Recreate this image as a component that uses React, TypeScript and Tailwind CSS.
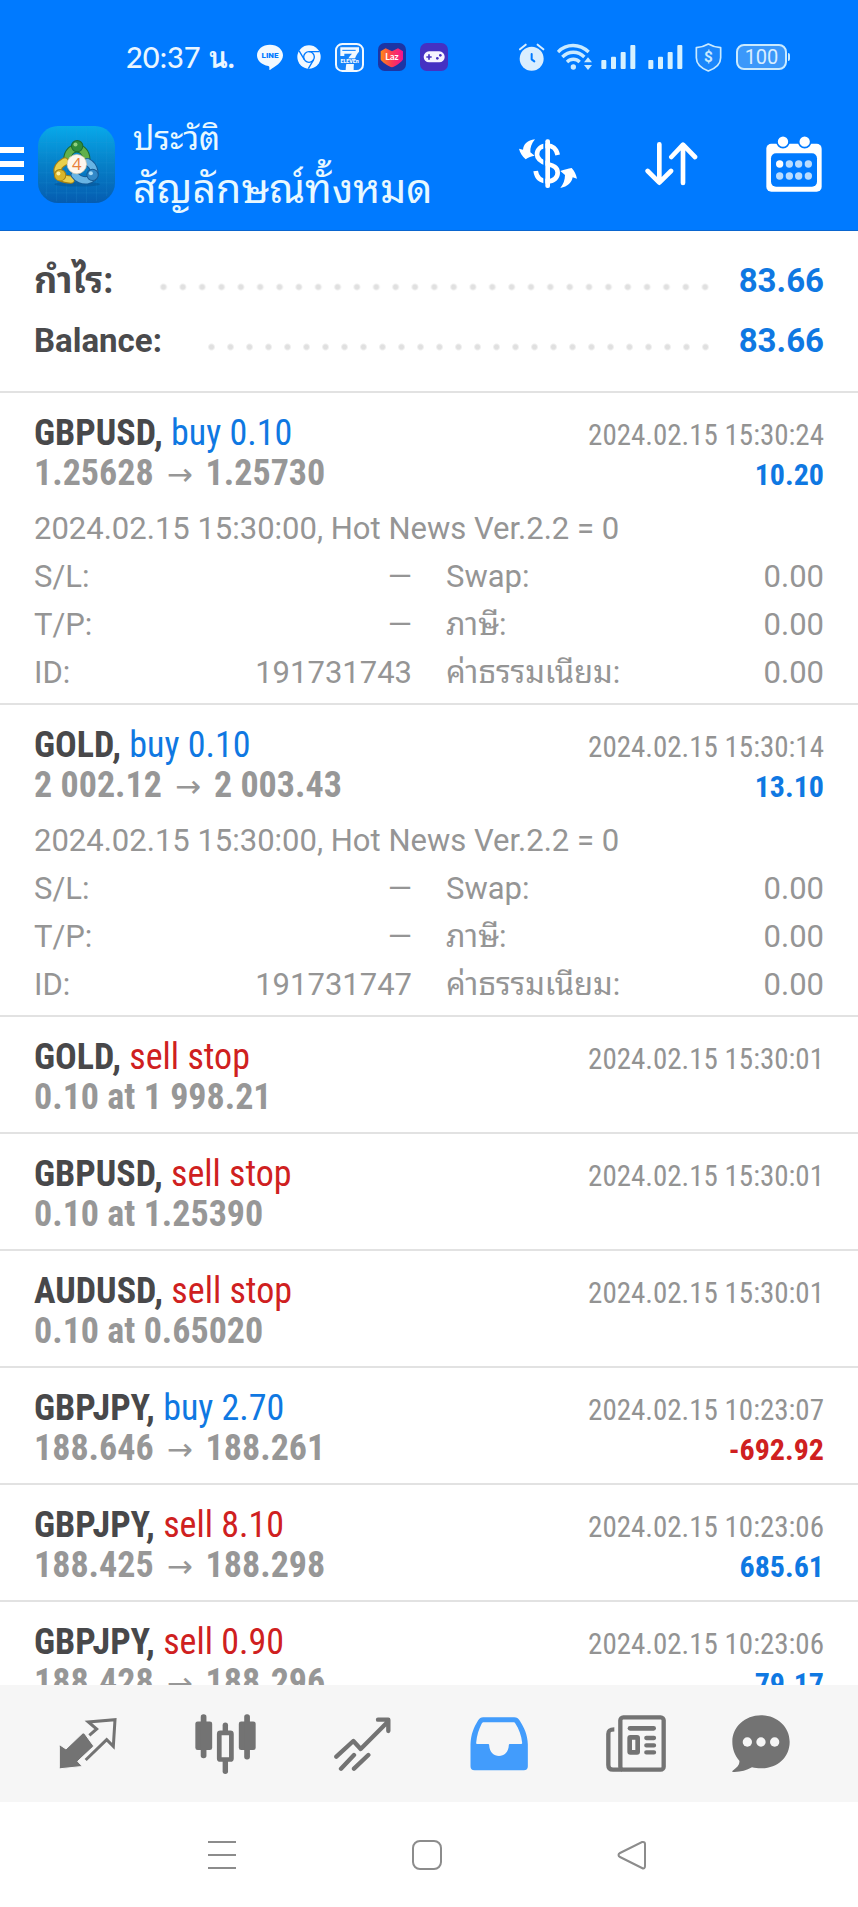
import { ReactNode } from 'react';

interface TradeDetails {
    comment: string;
    id: string;
}

interface Trade {
    symbol: string;
    side: 'buy' | 'sell';
    action: string;
    from: string;
    to?: string;
    time: string;
    profit?: string;
    details?: TradeDetails;
}

const COMMENT = '2024.02.15 15:30:00, Hot News Ver.2.2 = 0';

const trades: Trade[] = [
    { symbol: 'GBPUSD', side: 'buy', action: 'buy 0.10', from: '1.25628', to: '1.25730', time: '2024.02.15 15:30:24', profit: '10.20', details: { comment: COMMENT, id: '191731743' } },
    { symbol: 'GOLD', side: 'buy', action: 'buy 0.10', from: '2 002.12', to: '2 003.43', time: '2024.02.15 15:30:14', profit: '13.10', details: { comment: COMMENT, id: '191731747' } },
    { symbol: 'GOLD', side: 'sell', action: 'sell stop', from: '0.10 at 1 998.21', time: '2024.02.15 15:30:01' },
    { symbol: 'GBPUSD', side: 'sell', action: 'sell stop', from: '0.10 at 1.25390', time: '2024.02.15 15:30:01' },
    { symbol: 'AUDUSD', side: 'sell', action: 'sell stop', from: '0.10 at 0.65020', time: '2024.02.15 15:30:01' },
    { symbol: 'GBPJPY', side: 'buy', action: 'buy 2.70', from: '188.646', to: '188.261', time: '2024.02.15 10:23:07', profit: '-692.92' },
    { symbol: 'GBPJPY', side: 'sell', action: 'sell 8.10', from: '188.425', to: '188.298', time: '2024.02.15 10:23:06', profit: '685.61' },
    { symbol: 'GBPJPY', side: 'sell', action: 'sell 0.90', from: '188.428', to: '188.296', time: '2024.02.15 10:23:06', profit: '79.17' },
];

function LineIcon() {
    return (
        <svg className="w-[26px] h-[26px]" viewBox="0 0 78 78" aria-hidden="true">
            <path fill="#f2f9ff" d="M39 2C17 2 0 16 0 34c0 16 14 29 34 32 4 1 3 4 3 10 0 2 1 2 3 1 12-7 38-22 38-43C78 16 61 2 39 2Z" />
            <text x="39" y="43" textAnchor="middle" fontFamily="Roboto" fontWeight="900" fontSize="24" fill="#007aff">LINE</text>
        </svg>
    )
}

function ChromeIcon() {
    return (
        <svg className="w-6 h-6" viewBox="0 0 72 72" aria-hidden="true">
            <circle cx="36" cy="36" r="35" fill="#f2f9ff" />
            <g fill="none" stroke="#007aff" strokeWidth="4">
                <circle cx="36" cy="36" r="16" />
                <path d="M36 20h31M22 44 6 17M50 44 34 71" />
            </g>
            <circle cx="36" cy="36" r="11" fill="#f2f9ff" />
        </svg>
    )
}

function SevenIcon() {
    return (
        <svg className="w-[29px] h-[29px]" viewBox="0 0 87 87" aria-hidden="true">
            <rect x="3" y="3" width="81" height="81" rx="19" fill="#1583fa" stroke="#f2f9ff" strokeWidth="6" />
            <path fill="#f2f9ff" d="M16 13h56v13C61 38 56 52 56 81H32c1-24 7-38 19-49H28v7H16Z" />
            <path stroke="#007aff" strokeWidth="3" d="M22 22h40" />
            <path fill="#1583fa" d="M18 46h53v17H18z" />
            <text x="44" y="60" textAnchor="middle" fontFamily="Roboto" fontWeight="900" fontSize="16" fill="#f2f9ff">ELEVEn</text>
        </svg>
    )
}

function LazadaIcon() {
    return (
        <svg className="w-7 h-7" viewBox="0 0 84 84" aria-hidden="true">
            <defs>
                <linearGradient id="laz" x1="0" y1="0" x2="1" y2="0">
                    <stop offset="0" stopColor="#ff8a16" />
                    <stop offset="0.5" stopColor="#fb3a55" />
                    <stop offset="1" stopColor="#f2128f" />
                </linearGradient>
            </defs>
            <rect width="84" height="84" rx="20" fill="#1c35a4" />
            <path fill="url(#laz)" d="m8 25 15-9 19 9 18-9 15 9v24c0 5-26 24-33 24S8 55 8 49Z" />
            <text x="42" y="51" textAnchor="middle" fontFamily="Lato" fontWeight="700" fontSize="27" fill="#fff">Laz</text>
        </svg>
    )
}

function GameIcon() {
    return (
        <svg className="w-7 h-7" viewBox="0 0 84 84" aria-hidden="true">
            <rect width="84" height="84" rx="20" fill="#4531c2" />
            <rect x="11" y="25" width="63" height="33" rx="16" fill="#f6f4ff" />
            <path stroke="#4531c2" strokeWidth="5" d="M19 42h16M27 34v16" />
            <circle cx="52" cy="46" r="4" fill="#4531c2" />
            <circle cx="61" cy="37" r="4" fill="#4531c2" />
        </svg>
    )
}

function AlarmIcon() {
    return (
        <svg className="w-[26px] h-7" viewBox="0 0 78 84" aria-hidden="true">
            <circle cx="38" cy="47" r="36" fill="#d9eeff" />
            <path fill="none" stroke="#d9eeff" strokeWidth="6" strokeLinecap="round" d="M3 19 20 5M73 19 56 5" />
            <path fill="none" stroke="#007aff" strokeWidth="6" strokeLinecap="round" strokeLinejoin="round" d="M38 33v16l8 6" />
        </svg>
    )
}

function WifiIcon() {
    return (
        <svg className="w-9 h-7" viewBox="0 0 108 84" aria-hidden="true">
            <g fill="none" stroke="#c9eaff" strokeWidth="10">
                <path d="M3 27C28 1 68 1 95 27" />
                <path d="M16 42c19-19 47-19 66 0" />
                <path d="M30 57c11-11 27-11 38 0" />
            </g>
            <circle cx="49" cy="72" r="8" fill="#c9eaff" />
            <path fill="#c9eaff" d="m93 43 12 15H81ZM93 81 81 66h24Z" />
        </svg>
    )
}

function SignalIcon() {
    return (
        <svg className="w-[35px] h-[26px]" viewBox="0 0 105 78" fill="#d5f1ff" aria-hidden="true">
            <rect x="1" y="48" width="15" height="27" rx="3" />
            <rect x="30" y="38" width="15" height="37" rx="3" />
            <rect x="59" y="24" width="15" height="51" rx="3" />
            <rect x="88" y="3" width="15" height="72" rx="3" />
        </svg>
    )
}

function ShieldIcon() {
    return (
        <svg className="w-[27px] h-[29px]" viewBox="0 0 81 87" aria-hidden="true">
            <path fill="#1b86fb" stroke="#c9eaff" strokeWidth="5" strokeLinejoin="round" d="M40 3c12 7 24 10 37 11v30c0 20-16 32-37 40C20 76 4 64 4 44V14C17 13 28 10 40 3Z" />
            <text x="40" y="58" textAnchor="middle" fontFamily="Roboto" fontWeight="700" fontSize="46" fill="#c9eaff">$</text>
        </svg>
    )
}

function Battery() {
    return (
        <div className="flex items-center gap-px">
            <div className="flex h-[26px] w-[51px] items-center justify-center rounded-lg border-2 border-[#c9eaff] bg-[#3b98fa] font-[Roboto] text-xl leading-none text-[#d9eeff]">
                100
            </div>
            <div className="h-2 w-0.5 rounded-r bg-[#c9eaff]"></div>
        </div>
    )
}

function AppLogo() {
    return (
        <svg className="w-[77px] h-[77px] shrink-0" viewBox="0 0 230 230" aria-hidden="true">
            <defs>
                <linearGradient id="logoBg" x1="0" y1="0" x2="0" y2="1">
                    <stop offset="0" stopColor="#08a9ea" />
                    <stop offset="0.5" stopColor="#0680c8" />
                    <stop offset="1" stopColor="#055cb0" />
                </linearGradient>
            </defs>
            <rect width="230" height="230" rx="60" fill="url(#logoBg)" />
            <path stroke="#2fa0da" strokeOpacity="0.25" strokeWidth="2" d="M25 20v190M55 5v220M85 2v226M115 2v226M145 2v226M175 5v220M205 20v190M5 50h220M2 80h226M2 110h226M2 140h226M2 170h226M20 200h190" />
            <ellipse cx="117" cy="174" rx="68" ry="7" fill="#03508f" opacity="0.5" />
            {/* people: head on a curved body, one per colour */}
            <g fill="none" strokeLinecap="round">
                <path stroke="#1d6a31" strokeWidth="25" d="M88 98c2-42 54-42 56 0" />
                <path stroke="#62b04c" strokeWidth="19" d="M88 98c2-42 54-42 56 0" />
                <path stroke="#a37f13" strokeWidth="25" d="M80 106c-34 18-28 52 18 54" />
                <path stroke="#ead04c" strokeWidth="19" d="M80 106c-34 18-28 52 18 54" />
                <path stroke="#155994" strokeWidth="25" d="M110 146c16 24 62 22 58-10-2-12-8-22-20-28" />
                <path stroke="#68b4e4" strokeWidth="19" d="M110 146c16 24 62 22 58-10-2-12-8-22-20-28" />
            </g>
            <circle cx="116" cy="114" r="29" fill="#fdf6ee" stroke="#d9c9a8" strokeWidth="2" />
            <circle cx="117" cy="60" r="17" fill="#2f8d3c" stroke="#1d6a31" strokeWidth="3" />
            <circle cx="66" cy="147" r="17" fill="#d9b52a" stroke="#a37f13" strokeWidth="3" />
            <circle cx="163" cy="146" r="17" fill="#3389c8" stroke="#155994" strokeWidth="3" />
            <circle cx="112" cy="55" r="6" fill="#90d080" />
            <circle cx="61" cy="142" r="6" fill="#fff2a0" />
            <circle cx="158" cy="141" r="6" fill="#a8dcf8" />
            <text x="116" y="132" textAnchor="middle" fontFamily="Open Sans" fontSize="50" fill="#e8803a">4</text>
        </svg>
    )
}

function CurrencyIcon() {
    return (
        <svg className="w-[58px] h-[50px]" viewBox="0 0 174 150" fill="#fff" aria-hidden="true">
            <path d="M48 1C25 4 14 15 12 32L0 29c3 13 10 23 20 32 8-6 17-10 27-11L34 40C33 26 38 12 48 1Z" />
            <path fill="none" stroke="#fff" strokeWidth="14" d="M116 48C112 28 99 20 86 20 65 20 54 32 54 46c0 17 16 24 32 29s30 9 30 26c0 15-12 26-30 26-20 0-33-10-36-31" />
            <path fill="#007aff" d="M73 0h6v150h-6z" />
            <rect x="79" y="1" width="14" height="146" rx="6" />
            <path d="M124 147c23-4 34-16 37-32l13 4c-3-13-8-23-16-32-10 2-22 5-34 9l14 12c0 15-5 28-14 39Z" />
        </svg>
    )
}

function SortIcon() {
    return (
        <svg className="w-[53px] h-[46px]" viewBox="0 0 159 138" fill="none" stroke="#fff" strokeWidth="14" strokeLinecap="round" strokeLinejoin="round" aria-hidden="true">
            <path d="M43 10v112M8 90l35 35 35-35M114 126V14M79 48l35-37 36 37" />
        </svg>
    )
}

function CalendarIcon() {
    return (
        <svg className="w-14 h-14" viewBox="0 0 168 168" aria-hidden="true">
            <rect x="1" y="23" width="166" height="144" rx="15" fill="#fff" />
            <rect x="15" y="52" width="138" height="100" rx="15" fill="#007aff" />
            <g fill="#fff" stroke="#007aff" strokeWidth="5">
                <circle cx="51" cy="17" r="18" />
                <circle cx="116" cy="17" r="18" />
            </g>
            <circle cx="41" cy="84" r="11" fill="#fff" />
            <g fill="#b9dcff">
                <circle cx="70" cy="84" r="11" />
                <circle cx="98" cy="84" r="11" />
                <circle cx="127" cy="84" r="11" />
                <circle cx="41" cy="120" r="11" />
                <circle cx="70" cy="120" r="11" />
                <circle cx="98" cy="120" r="11" />
                <circle cx="127" cy="120" r="11" />
            </g>
        </svg>
    )
}

function QuotesIcon() {
    return (
        <svg className="w-[58px] h-[51px]" viewBox="0 0 174 153" aria-hidden="true">
            <path fill="none" stroke="#737373" strokeWidth="9" strokeLinejoin="miter" d="m80 126 63-61 20 20 5-80-80 7 25 21-22 19" />
            <path fill="#737373" stroke="#f6f6f6" strokeWidth="3" d="M1 85v63c0 3 2 5 5 4l58-6c4-1 4-3 1-6l-9-10 45-42c3-3 3-5 0-8L78 48c-4-4-6-4-9-1L21 93 6 83c-3-2-5-1-5 2Z" />
        </svg>
    )
}

function ChartIcon() {
    return (
        <svg className="w-[61px] h-[60px]" viewBox="0 0 181 178" aria-hidden="true">
            <g fill="#737373">
                <rect x="1" y="22" width="50" height="85" rx="7" />
                <rect x="130" y="22" width="50" height="85" rx="7" />
                <rect x="17" y="1" width="17" height="130" rx="8" />
                <rect x="146" y="1" width="17" height="134" rx="8" />
                <rect x="82" y="25" width="16" height="36" rx="8" />
                <rect x="82" y="130" width="16" height="48" rx="8" />
            </g>
            <rect x="72" y="56" width="36" height="79" rx="3" fill="#f6f6f6" stroke="#737373" strokeWidth="14" />
        </svg>
    )
}

function TradeIcon() {
    return (
        <svg className="w-[57px] h-[54px]" viewBox="0 0 171 162" fill="none" stroke="#737373" strokeWidth="13" strokeLinecap="round" strokeLinejoin="round" aria-hidden="true">
            <path d="m7 119 51-47 22 24 80-80M132 8h31v34M21 155l39-41M60 155l43-41" />
        </svg>
    )
}

function HistoryIcon() {
    return (
        <svg className="w-[58px] h-[54px]" viewBox="0 0 173 162" aria-hidden="true">
            <path fill="#429cfc" fillRule="evenodd" d="M39 1h93c8 0 12 3 16 9 14 22 24 43 25 72v66c0 8-4 12-12 12H13c-8 0-12-4-12-12V82C2 52 11 31 24 10 28 4 32 1 39 1Zm2 15c-4 0-5 2-7 5C26 37 20 55 18 77c0 3 1 4 4 4h32c2 0 3 1 3 3 1 44 58 44 59 0 0-2 1-3 3-3h33c3 0 4-1 4-4-2-22-10-42-20-57-2-3-3-4-7-4Z" />
        </svg>
    )
}

function NewsIcon() {
    return (
        <svg className="w-[60px] h-[57px]" viewBox="0 0 180 171" fill="none" stroke="#737373" strokeWidth="13" strokeLinecap="round" aria-hidden="true">
            <rect x="43" y="7" width="130" height="157" rx="9" />
            <path strokeLinecap="butt" d="M25 43c-14 0-18 4-18 14v93c0 10 4 14 14 14h28" />
            <path d="M72 40h71" strokeWidth="14" />
            <rect x="71" y="67" width="24" height="45" rx="2" strokeWidth="14" />
            <path d="M121 69h23M121 91h23M121 112h23" />
        </svg>
    )
}

function ChatIcon() {
    return (
        <svg className="w-[58px] h-[58px]" viewBox="0 0 174 174" aria-hidden="true">
            <path fill="#737373" d="M87 1c48 0 86 35 86 79 0 48-38 80-86 80-10 0-18-1-27-3-18 9-35 15-57 14-3 0-3-3-1-4 15-10 22-19 20-30C9 122 1 103 1 80 1 36 39 1 87 1Z" />
            <g fill="#f6f6f6">
                <circle cx="46" cy="81" r="14" />
                <circle cx="87" cy="81" r="14" />
                <circle cx="128" cy="81" r="14" />
            </g>
        </svg>
    )
}

function StatusBar() {
    return (
        <div className="flex h-[98px] items-center justify-between pt-4 pr-[68px] pl-[126px]">
            <div className="flex items-center gap-[14px]">
                <span className="mr-2 font-[Lato,Loma,'Noto_Sans_Thai',sans-serif] text-[29px] font-medium whitespace-nowrap text-[#eaf6ff]">
                    20:37 <b>น.</b>
                </span>
                <LineIcon />
                <ChromeIcon />
                <SevenIcon />
                <LazadaIcon />
                <GameIcon />
            </div>
            <div className="flex items-center gap-3">
                <AlarmIcon />
                <div className="flex items-center gap-2">
                    <WifiIcon />
                    <SignalIcon />
                </div>
                <SignalIcon />
                <div className="flex items-center gap-[14px]">
                    <ShieldIcon />
                    <Battery />
                </div>
            </div>
        </div>
    )
}

function Header() {
    return (
        <header className="shrink-0 border-b border-[#0a66d0] bg-[#007aff] text-white">
            <StatusBar />
            <div className="flex h-[132px] items-center pr-9">
                <button type="button" aria-label="Menu" className="mr-[14px] flex w-6 flex-col gap-2">
                    <span className="h-[6px] bg-white"></span>
                    <span className="h-[6px] bg-white"></span>
                    <span className="h-[6px] bg-white"></span>
                </button>
                <AppLogo />
                <h1 className="ml-[18px] flex flex-1 flex-col whitespace-nowrap text-[#e8f8ff]">
                    <span className="text-[33px] leading-[50px]">ประวัติ</span>
                    <span className="text-[41px] leading-[50px]">สัญลักษณ์ทั้งหมด</span>
                </h1>
                <div className="flex items-center gap-[68px]">
                    <button type="button" aria-label="Currency"><CurrencyIcon /></button>
                    <button type="button" aria-label="Sort"><SortIcon /></button>
                    <button type="button" aria-label="Period"><CalendarIcon /></button>
                </div>
            </div>
        </header>
    )
}

function SummaryRow({ label, value }: { label: ReactNode; value: string }) {
    return (
        <div className="flex h-[60px] items-center text-[33px] font-bold">
            <span className="text-[#4a4a4c]">{label}</span>
            <span className="mt-3 mr-6 ml-10 h-2 flex-1 bg-[radial-gradient(circle,#e0e0e0_2px,transparent_4px)] bg-[length:19px_8px] bg-repeat-space"></span>
            <span className="text-[#0f78e2]">{value}</span>
        </div>
    )
}

function DetailRow({ label, value }: { label: string; value: string }) {
    return (
        <div className="flex h-12 justify-between">
            <dt>{label}</dt>
            <dd>{value}</dd>
        </div>
    )
}

function TradeRow({ trade }: { trade: Trade }) {
    const { symbol, side, action, from, to, time, profit, details } = trade;
    const sideColor = side === 'buy' ? 'text-[#0f78e2]' : 'text-[#cf2020]';
    const profitColor = profit?.startsWith('-') ? 'text-[#cf2020]' : 'text-[#0f78e2]';

    return (
        <li className={`border-b-2 border-[#e2e2e2] px-[34px] pt-5 ${details ? 'pb-[6px]' : 'pb-[15px]'}`}>
            <div className="flex h-10 items-baseline justify-between font-['Roboto_Condensed',Roboto,sans-serif] leading-10 whitespace-nowrap">
                <span className="text-[36px]">
                    <b className="text-[#48484a]">{symbol},</b> <span className={sideColor}>{action}</span>
                </span>
                <time className="text-[29px] text-[#939393]">{time}</time>
            </div>
            <div className="flex h-10 items-baseline justify-between font-['Roboto_Condensed',Roboto,sans-serif] leading-10 font-bold whitespace-nowrap">
                <span className="text-[36px] text-[#979797]">
                    {from}
                    {to && <><span className="mx-[13px] font-['DejaVu_Sans'] text-[31px] leading-none font-normal">→</span>{to}</>}
                </span>
                <span className={`text-[30px] ${profitColor}`}>{profit}</span>
            </div>
            {details && (
                <div className="mt-3 text-[31px] leading-[48px] text-[#959595]">
                    <p>{details.comment}</p>
                    <div className="flex gap-[34px]">
                        <dl className="flex-1">
                            <DetailRow label="S/L:" value="—" />
                            <DetailRow label="T/P:" value="—" />
                            <DetailRow label="ID:" value={details.id} />
                        </dl>
                        <dl className="flex-1">
                            <DetailRow label="Swap:" value="0.00" />
                            <DetailRow label="ภาษี:" value="0.00" />
                            <DetailRow label="ค่าธรรมเนียม:" value="0.00" />
                        </dl>
                    </div>
                </div>
            )}
        </li>
    )
}

function TabButton({ label, className, children }: { label: string; className?: string; children: ReactNode }) {
    return (
        <button type="button" aria-label={label} className={className}>
            {children}
        </button>
    )
}

function TabBar() {
    return (
        <nav className="flex h-[117px] shrink-0 items-center justify-between bg-[#f6f6f6] pr-[68px] pl-[59px]">
            <TabButton label="Quotes"><QuotesIcon /></TabButton>
            <TabButton label="Chart"><ChartIcon /></TabButton>
            <TabButton label="Trade"><TradeIcon /></TabButton>
            <TabButton label="History"><HistoryIcon /></TabButton>
            <TabButton label="News"><NewsIcon /></TabButton>
            <TabButton label="Messages" className="-ml-3"><ChatIcon /></TabButton>
        </nav>
    )
}

function SystemNav() {
    return (
        <div className="flex h-[105px] shrink-0 items-center justify-center gap-[175px] bg-white pr-1">
            <button type="button" aria-label="Recent apps">
                <svg className="w-[30px] h-[30px]" viewBox="0 0 30 30" stroke="#8c8c8c" strokeWidth="2">
                    <path d="M1 2h28M1 15h28M1 28h28" />
                </svg>
            </button>
            <button type="button" aria-label="Home">
                <svg className="w-[30px] h-[30px]" viewBox="0 0 30 30" fill="none" stroke="#8c8c8c" strokeWidth="2">
                    <rect x="1" y="1" width="28" height="28" rx="7" />
                </svg>
            </button>
            <button type="button" aria-label="Back">
                <svg className="w-[30px] h-[30px]" viewBox="0 0 30 30" fill="none" stroke="#8c8c8c" strokeWidth="2">
                    <path d="M26 2c1 0 2 1 2 2v22c0 2-1 3-3 2L3 17c-2-1-2-3 0-4L25 2Z" />
                </svg>
            </button>
        </div>
    )
}

export default function App() {
    return (
        <div className="flex h-screen flex-col overflow-hidden bg-white font-[Roboto,'Noto_Sans_Thai_Looped','Droid_Sans_Thai',Loma,Waree,'Noto_Sans_Thai',sans-serif]">
            <Header />
            <main className="min-h-0 flex-1 overflow-y-auto [scrollbar-width:none]">
                <section className="border-b-2 border-[#e2e2e2] px-[34px] py-5">
                    <SummaryRow label={<span className="text-[36px]">กำไร:</span>} value="83.66" />
                    <SummaryRow label="Balance:" value="83.66" />
                </section>
                <ul>
                    {trades.map((trade, index) => (
                        <TradeRow key={index} trade={trade} />
                    ))}
                </ul>
            </main>
            <TabBar />
            <SystemNav />
        </div>
    )
}
